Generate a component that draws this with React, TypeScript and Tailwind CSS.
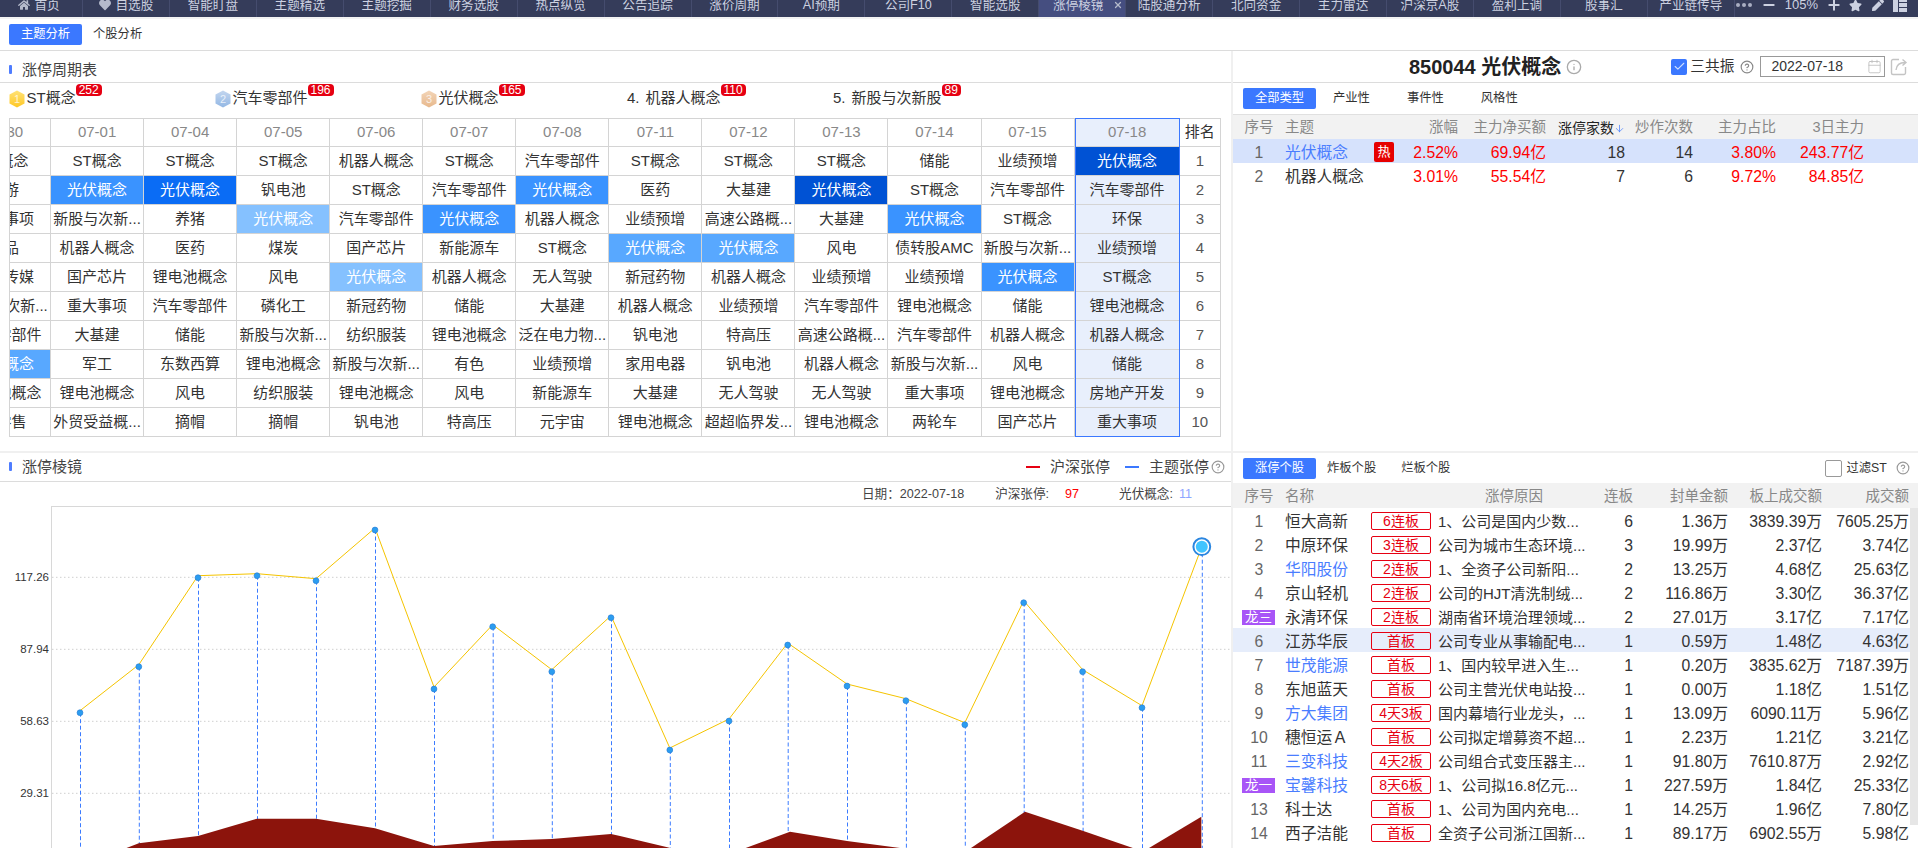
import { ArrowDown, Calendar, CircleHelp, Info, Minus, Plus, Check, X } from 'lucide-react';
import { FaHome, FaHeart, FaStar, FaPen } from 'react-icons/fa';

const NAV = [
  '首页', '自选股', '智能盯盘', '主题精选', '主题挖掘', '财务选股', '热点纵览', '公告追踪', '涨价周期', 'AI预期',
  '公司F10', '智能选股', '涨停棱镜', '陆股通分析', '北向资金', '主力雷达', '沪深京A股', '盈利上调', '股事汇', '产业链传导',
];

const DATES = ['06-30', '07-01', '07-04', '07-05', '07-06', '07-07', '07-08', '07-11', '07-12', '07-13', '07-14', '07-15', '07-18'];

const GF = '光伏概念';
const ROWS: string[][] = [
  ['ST概念', 'ST概念', 'ST概念', 'ST概念', '机器人概念', 'ST概念', '汽车零部件', 'ST概念', 'ST概念', 'ST概念', '储能', '业绩预增', GF],
  ['旅游', GF, GF, '钒电池', 'ST概念', '汽车零部件', GF, '医药', '大基建', GF, 'ST概念', '汽车零部件', '汽车零部件'],
  ['重大事项', '新股与次新...', '养猪', GF, '汽车零部件', GF, '机器人概念', '业绩预增', '高速公路概...', '大基建', GF, 'ST概念', '环保'],
  ['食品', '机器人概念', '医药', '煤炭', '国产芯片', '新能源车', 'ST概念', GF, GF, '风电', '债转股AMC', '新股与次新...', '业绩预增'],
  ['影视传媒', '国产芯片', '锂电池概念', '风电', GF, '机器人概念', '无人驾驶', '新冠药物', '机器人概念', '业绩预增', '业绩预增', GF, 'ST概念'],
  ['新股与次新...', '重大事项', '汽车零部件', '磷化工', '新冠药物', '储能', '大基建', '机器人概念', '业绩预增', '汽车零部件', '锂电池概念', '储能', '锂电池概念'],
  ['汽车零部件', '大基建', '储能', '新股与次新...', '纺织服装', '锂电池概念', '泛在电力物...', '钒电池', '特高压', '高速公路概...', '汽车零部件', '机器人概念', '机器人概念'],
  [GF, '军工', '东数西算', '锂电池概念', '新股与次新...', '有色', '业绩预增', '家用电器', '钒电池', '机器人概念', '新股与次新...', '风电', '储能'],
  ['锂电池概念', '锂电池概念', '风电', '纺织服装', '锂电池概念', '风电', '新能源车', '大基建', '无人驾驶', '无人驾驶', '重大事项', '锂电池概念', '房地产开发'],
  ['新零售', '外贸受益概...', '摘帽', '摘帽', '钒电池', '特高压', '元宇宙', '锂电池概念', '超超临界发...', '锂电池概念', '两轮车', '国产芯片', '重大事项'],
];

// shade of each highlighted cell, by column index then row index
const HEAT: Record<string, string> = {
  '0-7': 'bg-[#58a8ff]',
  '1-1': 'bg-[#3a93ff]',
  '2-1': 'bg-[#0a6cf5]',
  '3-2': 'bg-[#85c1ff]',
  '4-4': 'bg-[#85c1ff]',
  '5-2': 'bg-[#3a93ff]',
  '6-1': 'bg-[#3a93ff]',
  '7-3': 'bg-[#58a8ff]',
  '8-3': 'bg-[#58a8ff]',
  '9-1': 'bg-[#0052d4]',
  '10-2': 'bg-[#3a93ff]',
  '11-4': 'bg-[#3a93ff]',
  '12-0': 'bg-[#0052d4]',
};

const STOCKS = [
  ['1', '恒大高新', '6连板', '1、公司是国内少数...', '6', '1.36万', '3839.39万', '7605.25万', ''],
  ['2', '中原环保', '3连板', '公司为城市生态环境...', '3', '19.99万', '2.37亿', '3.74亿', ''],
  ['3', '华阳股份', '2连板', '1、全资子公司新阳...', '2', '13.25万', '4.68亿', '25.63亿', 'link'],
  ['4', '京山轻机', '2连板', '公司的HJT清洗制绒...', '2', '116.86万', '3.30亿', '36.37亿', ''],
  ['龙三', '永清环保', '2连板', '湖南省环境治理领域...', '2', '27.01万', '3.17亿', '7.17亿', ''],
  ['6', '江苏华辰', '首板', '公司专业从事输配电...', '1', '0.59万', '1.48亿', '4.63亿', 'hl'],
  ['7', '世茂能源', '首板', '1、国内较早进入生...', '1', '0.20万', '3835.62万', '7187.39万', 'link'],
  ['8', '东旭蓝天', '首板', '公司主营光伏电站投...', '1', '0.00万', '1.18亿', '1.51亿', ''],
  ['9', '方大集团', '4天3板', '国内幕墙行业龙头，...', '1', '13.09万', '6090.11万', '5.96亿', 'link'],
  ['10', '穗恒运Ａ', '首板', '公司拟定增募资不超...', '1', '2.23万', '1.21亿', '3.21亿', ''],
  ['11', '三变科技', '4天2板', '公司组合式变压器主...', '1', '91.80万', '7610.87万', '2.92亿', 'link'],
  ['龙一', '宝馨科技', '8天6板', '1、公司拟16.8亿元...', '1', '227.59万', '1.84亿', '25.33亿', 'link'],
  ['13', '科士达', '首板', '1、公司为国内充电...', '1', '14.25万', '1.96亿', '7.80亿', ''],
  ['14', '西子洁能', '首板', '全资子公司浙江国新...', '1', '89.17万', '6902.55万', '5.98亿', ''],
  ['15', '南都电源', '首板', '公司主营铅蓄电池...', '1', '35.60万', '1.02亿', '3.45亿', ''],
];

const MARKERS: [number, number][] = [
  [80, 712.7], [138.8, 666.7], [198, 577.7], [257, 575.7], [316, 580.7], [375, 530], [434, 689], [492.7, 626.7],
  [551.8, 671.7], [611, 617.7], [669.8, 750], [729, 721], [787.7, 645], [847, 686], [905.9, 700.7], [964.8, 724.7],
  [1023.7, 602.7], [1082.6, 671.7], [1142, 707.7],
];
const LAST: [number, number] = [1201.8, 546.7];

const GRID = [
  { y: 577.3, label: '117.26' },
  { y: 649.3, label: '87.94' },
  { y: 721.3, label: '58.63' },
  { y: 793.3, label: '29.31' },
];

function Tab({ label, active }: { label: string; active?: boolean }) {
  return (
    <div
      className={
        active
          ? 'flex h-[21px] w-[73px] items-center justify-center rounded-[2px] bg-[#3b78ff] text-[12.3px] text-white'
          : 'flex h-[21px] items-center justify-center text-[12.3px] text-[#333]'
      }
    >
      {label}
    </div>
  );
}

function SectionTitle({ label }: { label: string }) {
  return (
    <div className="flex items-center pl-[9px]">
      <div className="h-[9px] w-[3px] -translate-y-[1px] rounded-[1px] bg-[#4f7dff]" />
      <div className="ml-[10px] text-[15px] leading-[20px] text-[#444]">{label}</div>
    </div>
  );
}

function Medal({ n, from, to }: { n: number; from: string; to: string }) {
  const id = `medal-${n}`;
  return (
    <svg width="16" height="18" viewBox="0 0 16 18" className="mt-[2px] shrink-0">
      <defs>
        <linearGradient id={id} x1="0" y1="0" x2="0" y2="1">
          <stop offset="0" stopColor={from} />
          <stop offset="1" stopColor={to} />
        </linearGradient>
      </defs>
      <polygon points="8,0.5 15.5,4.5 15.5,13.5 8,17.5 0.5,13.5 0.5,4.5" fill={`url(#${id})`} />
      <text x="8" y="13" textAnchor="middle" fontSize="11" fill="#fff" fillOpacity="0.75">
        {n}
      </text>
    </svg>
  );
}

function LegendItem({ rank, label, count }: { rank: number; label: string; count: number }) {
  return (
    <div className="flex w-[206px] items-start pt-[5px]">
      {rank === 1 && <Medal n={1} from="#ffe277" to="#ffc824" />}
      {rank === 2 && <Medal n={2} from="#c3d6ef" to="#92b7e4" />}
      {rank === 3 && <Medal n={3} from="#f3d5b8" to="#e7b88c" />}
      {rank > 3 && <div className="w-[17px] shrink-0 text-[15px] leading-[20px] text-[#333]">{rank}.</div>}
      <div className="ml-[1.5px] text-[15px] leading-[20px] text-[#333]">{label}</div>
      <div className="-mt-[4px] h-[12px] rounded-[4px] bg-[#e60012] px-[3px] font-['Liberation_Sans'] text-[12px] leading-[12px] text-white">
        {count}
      </div>
    </div>
  );
}

function Cycle() {
  return (
    <div className="ml-[9px] w-[1212px] overflow-hidden border-l border-[#d4d4d4]">
      <div className="-ml-[52px] flex">
        {DATES.map((date, c) => {
          const selected = c === DATES.length - 1;
          return (
            <div
              key={date}
              className={
                selected
                  ? 'relative z-10 w-[105px] shrink-0 outline outline-1 -outline-offset-1 outline-[#3b78ff]'
                  : 'w-[93.05px] shrink-0'
              }
            >
              <div
                className={`flex h-[29px] items-center justify-center border-t border-b border-[#d4d4d4] text-[15px] text-[#888] ${
                  selected ? 'bg-[#e8effc]' : 'border-r'
                }`}
              >
                {date}
              </div>
              {ROWS.map((row, r) => {
                const heat = HEAT[`${c}-${r}`];
                return (
                  <div
                    key={r}
                    className={`flex h-[29px] items-center justify-center overflow-hidden whitespace-nowrap border-b border-[#d4d4d4] text-[15px] ${
                      selected ? '' : 'border-r'
                    } ${heat ? `${heat} text-white` : selected ? 'bg-[#e8effc] text-[#333]' : 'text-[#333]'}`}
                  >
                    {row[c]}
                  </div>
                );
              })}
            </div>
          );
        })}
        <div className="w-[41.6px] shrink-0">
          <div className="flex h-[29px] items-center justify-center border-t border-r border-b border-[#d4d4d4] text-[15px] text-[#333]">
            排名
          </div>
          {ROWS.map((_, r) => (
            <div key={r} className="flex h-[29px] items-center justify-center border-r border-b border-[#d4d4d4] text-[15px] text-[#555]">
              {r + 1}
            </div>
          ))}
        </div>
      </div>
    </div>
  );
}

function Chart() {
  const line = [...MARKERS.map(([x, y]) => `${x},${y - 2}`), `${LAST[0]},${LAST[1]}`].join(' ');
  return (
    <svg width="1231" height="342" viewBox="0 506 1231 342" className="block">
      <line x1="51.5" y1="506.5" x2="1231" y2="506.5" stroke="#d8d8d8" />
      <line x1="51.5" y1="506" x2="51.5" y2="848" stroke="#d8d8d8" />
      {GRID.map((g) => (
        <g key={g.label}>
          <line x1="52" y1={g.y} x2="1231" y2={g.y} stroke="#cfcfcf" strokeDasharray="1.5 2.5" />
          <text x="49" y={g.y + 4} textAnchor="end" fontSize="11.5" fill="#333">
            {g.label}
          </text>
        </g>
      ))}
      {[...MARKERS, LAST].map(([x, y]) => (
        <line key={x} x1={x + 0.5} y1={y} x2={x + 0.5} y2="848" stroke="#3b7bff" strokeDasharray="4 2.5" />
      ))}
      <polygon
        points="126.5,848 138.8,843.3 198,836 257,818.7 316,818.7 375,828.3 434,846 492.7,841 551.8,839 611,834 620,836 667.4,847.3 670,848"
        fill="#8c140c"
      />
      <polygon points="745.7,848 790,831.7 847,841 900,848" fill="#8c140c" />
      <polygon points="971,848 1025,811.7 1082.6,830.7 1132.9,848" fill="#8c140c" />
      <polygon points="1149,848 1201.3,816.7 1201.3,848" fill="#8c140c" />
      <polyline points={line} fill="none" stroke="#f5c400" strokeWidth="1" />
      {MARKERS.map(([x, y]) => (
        <circle key={x} cx={x} cy={y} r="2.9" fill="#2b9df0" stroke="#2a7fd8" strokeWidth="0.7" />
      ))}
      <circle cx={LAST[0]} cy={LAST[1]} r="8.4" fill="#fff" stroke="#2a86e0" strokeWidth="2" />
      <circle cx={LAST[0]} cy={LAST[1]} r="6" fill="#40c4ff" />
    </svg>
  );
}

function Left() {
  return (
    <div className="flex w-[1231px] shrink-0 flex-col">
      <div className="h-[32px] border-b border-[#dcdcdc] pt-[9px]">
        <SectionTitle label="涨停周期表" />
      </div>
      <div className="flex h-[35px] pl-[9px]">
        <LegendItem rank={1} label="ST概念" count={252} />
        <LegendItem rank={2} label="汽车零部件" count={196} />
        <LegendItem rank={3} label="光伏概念" count={165} />
        <LegendItem rank={4} label="机器人概念" count={110} />
        <LegendItem rank={5} label="新股与次新股" count={89} />
      </div>
      <Cycle />
      <div className="mt-[14px] h-[2px] bg-[#f0f0f0]" />
      <div className="flex h-[29px] items-center justify-between border-b border-[#dcdcdc] pr-[6px]">
        <SectionTitle label="涨停棱镜" />
        <div className="flex items-center text-[15px] text-[#444]">
          <div className="h-[2px] w-[14px] bg-[#e60012]" />
          <div className="ml-[10px]">沪深张停</div>
          <div className="ml-[15px] h-[2px] w-[14px] bg-[#3b78ff]" />
          <div className="ml-[10px]">主题张停</div>
          <CircleHelp size={14} className="ml-[2px] text-[#999]" />
        </div>
      </div>
      <div className="flex h-[24px] items-center justify-end pr-[39px] text-[12.6px] text-[#444]">
        <div>日期：2022-07-18</div>
        <div className="ml-[31px]">沪深张停:</div>
        <div className="ml-[16px] text-[#f00]">97</div>
        <div className="ml-[40px]">光伏概念:</div>
        <div className="ml-[6px] text-[#8ea6ff]">11</div>
      </div>
      <Chart />
    </div>
  );
}

function ThemeTable() {
  const cols = 'grid grid-cols-[52px_89px_20px_64px_88px_79px_68px_83px_88px] items-center pt-[2px]';
  return (
    <div>
      <div className={`${cols} h-[24px] bg-[#f2f2f2] text-[14.5px] text-[#888]`}>
        <div className="text-center">序号</div>
        <div className="col-span-2">主题</div>
        <div className="text-right">涨幅</div>
        <div className="text-right">主力净买额</div>
        <div className="flex items-center justify-end text-[#222]">
          <span className="whitespace-nowrap text-[14px]">涨停家数</span>
          <ArrowDown size={11} strokeWidth={1.5} className="shrink-0 text-[#3b78ff]" />
        </div>
        <div className="text-right">炒作次数</div>
        <div className="text-right">主力占比</div>
        <div className="text-right">3日主力</div>
      </div>
      <div className={`${cols} h-[24px] bg-[#d6e2fc] text-[15.75px]`}>
        <div className="text-center text-[#666]">1</div>
        <div className="text-[#4a7dff]">光伏概念</div>
        <div className="-mt-[2px] flex h-[20px] w-[20px] items-center justify-center rounded-[2px] bg-[#e60000] text-[13px] text-white">热</div>
        <div className="text-right text-[#f00]">2.52%</div>
        <div className="text-right text-[#f00]">69.94亿</div>
        <div className="text-right text-[#333]">18</div>
        <div className="text-right text-[#333]">14</div>
        <div className="text-right text-[#f00]">3.80%</div>
        <div className="text-right text-[#f00]">243.77亿</div>
      </div>
      <div className={`${cols} h-[24px] text-[15.75px]`}>
        <div className="text-center text-[#666]">2</div>
        <div className="col-span-2 text-[#333]">机器人概念</div>
        <div className="text-right text-[#f00]">3.01%</div>
        <div className="text-right text-[#f00]">55.54亿</div>
        <div className="text-right text-[#333]">7</div>
        <div className="text-right text-[#333]">6</div>
        <div className="text-right text-[#f00]">9.72%</div>
        <div className="text-right text-[#f00]">84.85亿</div>
      </div>
    </div>
  );
}

function StockRow({ s }: { s: string[] }) {
  const [no, name, tag, reason, boards, seal, onBoard, total, kind] = s;
  const dragon = no.startsWith('龙');
  return (
    <div
      className={`grid h-[24px] grid-cols-[52px_86px_60px_166px_36px_95px_94px_87px] items-center whitespace-nowrap pt-[2px] text-[15.75px] ${
        kind === 'hl' ? 'bg-[#e6edfb]' : ''
      }`}
    >
      {dragon ? (
        <div className="ml-[9px] flex h-[15px] w-[33px] items-center justify-center bg-[#a855f7] text-[13.5px] text-white">{no}</div>
      ) : (
        <div className="text-center text-[#666]">{no}</div>
      )}
      <div className={kind === 'link' ? 'text-[#4a7dff]' : 'text-[#333]'}>{name}</div>
      <div className="-mt-[2px] flex h-[18px] items-center justify-center rounded-[2px] border border-[#e60012] pt-[2px] text-[14px] text-[#e60012]">
        {tag}
      </div>
      <div className="overflow-hidden pl-[7px] text-[15px] text-[#333]">{reason}</div>
      <div className="text-right text-[#333]">{boards}</div>
      <div className="text-right text-[#333]">{seal}</div>
      <div className="text-right text-[#333]">{onBoard}</div>
      <div className="text-right text-[#333]">{total}</div>
    </div>
  );
}

function Right() {
  return (
    <div className="flex w-[685px] shrink-0 flex-col">
      <div className="flex h-[32px] items-center border-b border-[#dcdcdc]">
        <div className="ml-[176px] text-[20px] font-bold text-[#222]">850044 光伏概念</div>
        <Info size={16} className="ml-[5px] text-[#aaa]" />
        <div className="ml-[89px] flex h-[16px] w-[16px] items-center justify-center rounded-[2px] bg-[#3b78ff]">
          <Check size={13} className="text-[#cfe0ff]" strokeWidth={2} />
        </div>
        <div className="ml-[3px] text-[14.7px] text-[#333]">三共振</div>
        <CircleHelp size={14} className="ml-[6px] text-[#888]" />
        <div className="ml-[6px] flex h-[21px] w-[125px] items-center justify-between border border-[#999] pl-[10px] pr-[2px] text-[14px] text-[#333]">
          <span>2022-07-18</span>
          <Calendar size={15} className="text-[#bbb]" strokeWidth={1.3} />
        </div>
        <svg width="18" height="19" viewBox="0 0 18 19" className="ml-[5px]" fill="none" stroke="#c4c4c4" strokeWidth="1.4">
          <path d="M9 2.5H3a1.5 1.5 0 0 0-1.5 1.5v12A1.5 1.5 0 0 0 3 17.5h11a1.5 1.5 0 0 0 1.5-1.5v-6" />
          <path d="M6 13c.5-5 3.500-7.500 9-7.500M12.500 2.500l3.500 3-3.500 3" />
        </svg>
      </div>
      <div className="flex h-[31px] items-center gap-[17px] pl-[10px]">
        <Tab label="全部类型" active />
        <div className="ml-[0px]"><Tab label="产业性" /></div>
        <div className="ml-[20px]"><Tab label="事件性" /></div>
        <div className="ml-[20px]"><Tab label="风格性" /></div>
      </div>
      <div className="h-[1px] bg-[#e0e0e0]" />
      <ThemeTable />
      <div className="mt-[264px] h-[2px] bg-[#f0f0f0]" />
      <div className="flex h-[30px] items-center pl-[10px]">
        <Tab label="涨停个股" active />
        <div className="ml-[11px]"><Tab label="炸板个股" /></div>
        <div className="ml-[25px]"><Tab label="烂板个股" /></div>
        <div className="ml-[375px] h-[17px] w-[17px] rounded-[2px] border border-[#999]" />
        <div className="ml-[4px] text-[12.3px] text-[#333]">过滤ST</div>
        <CircleHelp size={14} className="ml-[9px] text-[#999]" />
      </div>
      <div className="grid h-[25px] grid-cols-[52px_86px_60px_166px_36px_95px_94px_87px_9px] items-center whitespace-nowrap bg-[#f2f2f2] pt-[2px] text-[14.5px] text-[#888]">
        <div className="text-center">序号</div>
        <div className="col-span-2">名称</div>
        <div className="text-center">涨停原因</div>
        <div className="text-right">连板</div>
        <div className="text-right">封单金额</div>
        <div className="text-right">板上成交额</div>
        <div className="text-right">成交额</div>
      </div>
      <div className="flex">
        <div className="w-[677px]">
          {STOCKS.map((s) => (
            <StockRow key={s[1]} s={s} />
          ))}
        </div>
        <div className="h-[317px] w-[8px] bg-[#e6e6e6]" />
      </div>
    </div>
  );
}

export default function App() {
  return (
    <div className="h-[848px] w-[1918px] overflow-hidden bg-white font-['Liberation_Sans','Noto_Sans_CJK_SC',sans-serif]">
      <div className="flex h-[17px] overflow-hidden bg-[#353c5a] text-[12.6px] text-[#ccd1e0]">
        <div className="-ml-[4px] -mt-[7px] flex h-[24px] items-center">
          {NAV.map((label, i) => (
            <div
              key={label}
              className={`flex h-[24px] w-[86.95px] shrink-0 items-center justify-center border-r border-[#454c6e] ${
                label === '涨停棱镜' ? 'bg-[#454e80]' : ''
              }`}
            >
              {i === 0 && <FaHome size={12} className="mr-[4px] text-[#b5bacb]" />}
              {i === 1 && <FaHeart size={12} className="mr-[5px] text-[#b5bacb]" />}
              <span>{label}</span>
              {label === '涨停棱镜' && <X size={10} strokeWidth={3} className="ml-[10px] -mr-[12px] text-[#b5bacb]" />}
            </div>
          ))}
          <div className="ml-[1px] flex items-center text-[#ccd1e0]">
            <div className="flex gap-[2px]">
              <div className="h-[4px] w-[4px] rounded-full bg-[#a9aec2]" />
              <div className="h-[4px] w-[4px] rounded-full bg-[#a9aec2]" />
              <div className="h-[4px] w-[4px] rounded-full bg-[#a9aec2]" />
            </div>
            <Minus size={16} className="ml-[9px]" strokeWidth={3} />
            <div className="ml-[8px] w-[34px] text-[13px]">105%</div>
            <Plus size={16} className="ml-[7px]" strokeWidth={3} />
            <FaStar size={13} className="ml-[7px]" />
            <FaPen size={12} className="ml-[10px]" />
            <div className="ml-[9px] grid h-[14px] w-[14px] grid-cols-[5px_8px] grid-rows-3 gap-[1px]">
              <div className="row-span-3 bg-[#ccd1e0]" />
              <div className="bg-[#ccd1e0]" />
              <div className="bg-[#ccd1e0]" />
              <div className="bg-[#ccd1e0]" />
            </div>
          </div>
        </div>
      </div>
      <div className="h-[2px] bg-[#f3f3f3]" />
      <div className="flex h-[32px] items-start border-b border-[#dcdcdc] pl-[9px] pt-[5px]">
        <Tab label="主题分析" active />
        <div className="ml-[11px]"><Tab label="个股分析" /></div>
      </div>
      <div className="flex">
        <Left />
        <div className="w-[2px] shrink-0 bg-[#f0f0f0]" />
        <Right />
      </div>
    </div>
  );
}
